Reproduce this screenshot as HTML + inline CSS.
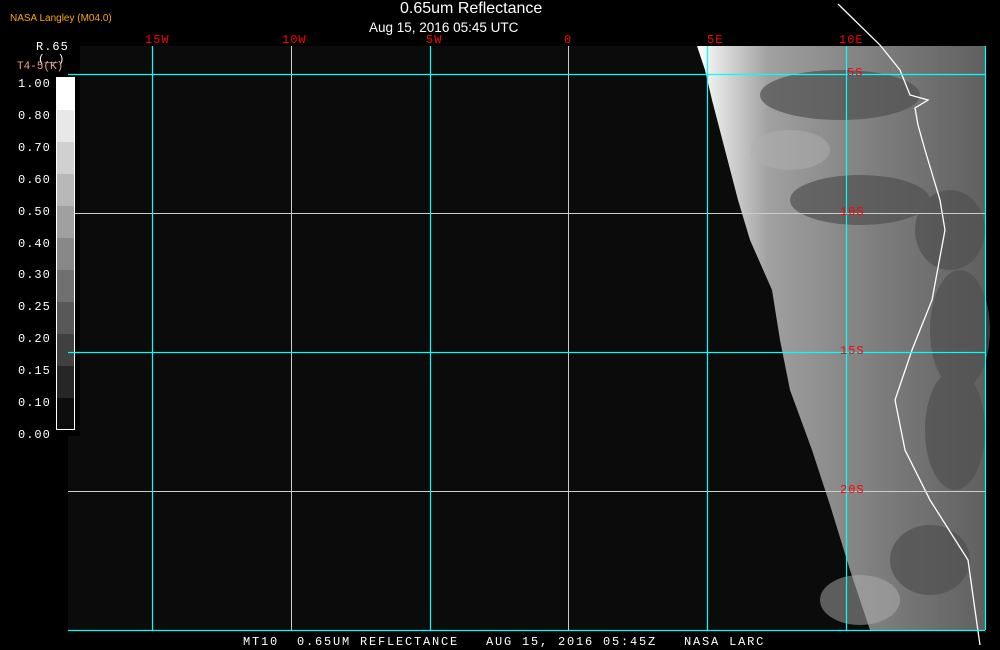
<!DOCTYPE html>
<html><head><style>
body{margin:0;background:#000;width:1000px;height:650px;overflow:hidden;position:relative;font-family:"Liberation Mono",monospace}
.t{position:absolute;white-space:pre}
.r{color:#f00;font-size:12px;letter-spacing:1px}
</style></head><body>
<svg width="1000" height="650" style="position:absolute;left:0;top:0">
<defs>
<linearGradient id="g" x1="0" y1="0" x2="1" y2="0">
<stop offset="0" stop-color="#fff"/><stop offset="0.08" stop-color="#e0e0e0"/><stop offset="0.25" stop-color="#a0a0a0"/><stop offset="0.6" stop-color="#808080"/><stop offset="1" stop-color="#606060"/>
</linearGradient>
</defs>
<rect x="68" y="46" width="917" height="584" fill="#0b0b0b"/>
<polygon points="697,46 985,46 985,630 870,630 850,570 830,505 812,450 790,390 780,340 772,290 750,240 738,200 725,150 712,100 705,70" fill="url(#g)"/>
<g fill="#505050" opacity="0.7">
<ellipse cx="840" cy="95" rx="80" ry="25"/>
<ellipse cx="860" cy="200" rx="70" ry="25"/>
<ellipse cx="960" cy="330" rx="30" ry="60"/>
<ellipse cx="930" cy="560" rx="40" ry="35"/>
<ellipse cx="955" cy="430" rx="30" ry="60"/>
<ellipse cx="950" cy="230" rx="35" ry="40"/>
</g>
<g fill="#b0b0b0" opacity="0.5">
<ellipse cx="790" cy="150" rx="40" ry="20"/>
<ellipse cx="860" cy="600" rx="40" ry="25"/>
</g>
<polyline points="838,4 880,45 900,70 910,95 928,100 915,108 918,125 925,150 940,200 945,230 932,300 912,350 895,400 905,450 930,500 968,560 975,610 980,645" fill="none" stroke="#fff" stroke-width="1.3"/>
<rect x="0" y="46" width="80" height="390" fill="#000"/>
<g stroke="#ccc" stroke-width="1">
<line x1="68" y1="213.5" x2="985" y2="213.5"/><line x1="68" y1="491.5" x2="985" y2="491.5"/>
<line x1="291.5" y1="46" x2="291.5" y2="630"/><line x1="568.5" y1="46" x2="568.5" y2="630"/>
</g>
<g stroke="#0ff" stroke-width="1.2">
<line x1="68" y1="74.5" x2="985" y2="74.5"/><line x1="68" y1="352.5" x2="985" y2="352.5"/><line x1="68" y1="630.5" x2="985" y2="630.5"/>
<line x1="152.5" y1="46" x2="152.5" y2="630"/><line x1="430.5" y1="46" x2="430.5" y2="630"/><line x1="707.5" y1="46" x2="707.5" y2="630"/><line x1="846.5" y1="46" x2="846.5" y2="630"/><line x1="985.5" y1="46" x2="985.5" y2="630"/>
</g>
<g>
<rect x="56" y="77" width="18" height="33" fill="#fff"/>
<rect x="56" y="110" width="18" height="32" fill="#e8e8e8"/>
<rect x="56" y="142" width="18" height="32" fill="#d0d0d0"/>
<rect x="56" y="174" width="18" height="32" fill="#b8b8b8"/>
<rect x="56" y="206" width="18" height="32" fill="#a0a0a0"/>
<rect x="56" y="238" width="18" height="32" fill="#888"/>
<rect x="56" y="270" width="18" height="32" fill="#707070"/>
<rect x="56" y="302" width="18" height="32" fill="#585858"/>
<rect x="56" y="334" width="18" height="32" fill="#404040"/>
<rect x="56" y="366" width="18" height="32" fill="#262626"/>
<rect x="56" y="398" width="18" height="32" fill="#0d0d0d"/>
<rect x="56.5" y="77.5" width="18" height="352" fill="none" stroke="#fff"/>
<line x1="68" y1="352.5" x2="80" y2="352.5" stroke="#0ff" stroke-width="1.2"/>
</g>
</svg>
<div class="t" style="left:10px;top:13px;color:#f9a800;font-family:'Liberation Sans',sans-serif;font-size:10px">NASA Langley (M04.0)</div>
<div class="t" style="left:400px;top:0px;color:#fff;font-family:'Liberation Sans',sans-serif;font-size:16px">0.65um Reflectance</div>
<div class="t" style="left:369px;top:20px;color:#fff;font-family:'Liberation Sans',sans-serif;font-size:13.5px">Aug 15, 2016 05:45 UTC</div>
<div class="t" style="left:36px;top:40px;color:#fff;font-size:12px;letter-spacing:1px">R.65</div>
<div class="t" style="left:38px;top:54px;color:#fff;font-size:11px">(__)</div>
<div class="t" style="left:17px;top:61px;color:#f0a080;font-size:11px">T4-5(K)</div>
<div class="t" style="left:18px;top:69px;color:#fff;font-size:12px;letter-spacing:1px;line-height:31.9px">1.00
0.80
0.70
0.60
0.50
0.40
0.30
0.25
0.20
0.15
0.10
0.00</div>
<div class="t r" style="left:145px;top:33px">15W</div>
<div class="t r" style="left:282px;top:33px">10W</div>
<div class="t r" style="left:426px;top:33px">5W</div>
<div class="t r" style="left:564px;top:33px">0</div>
<div class="t r" style="left:707px;top:33px">5E</div>
<div class="t r" style="left:839px;top:33px">10E</div>
<div class="t r" style="left:847px;top:66px">5S</div>
<div class="t r" style="left:840px;top:205px">10S</div>
<div class="t r" style="left:840px;top:344px">15S</div>
<div class="t r" style="left:840px;top:483px">20S</div>
<div class="t" style="left:243px;top:635px;color:#fff;font-size:12px;letter-spacing:1.8px">MT10  0.65UM REFLECTANCE   AUG 15, 2016 05:45Z   NASA LARC</div>
</body></html>
